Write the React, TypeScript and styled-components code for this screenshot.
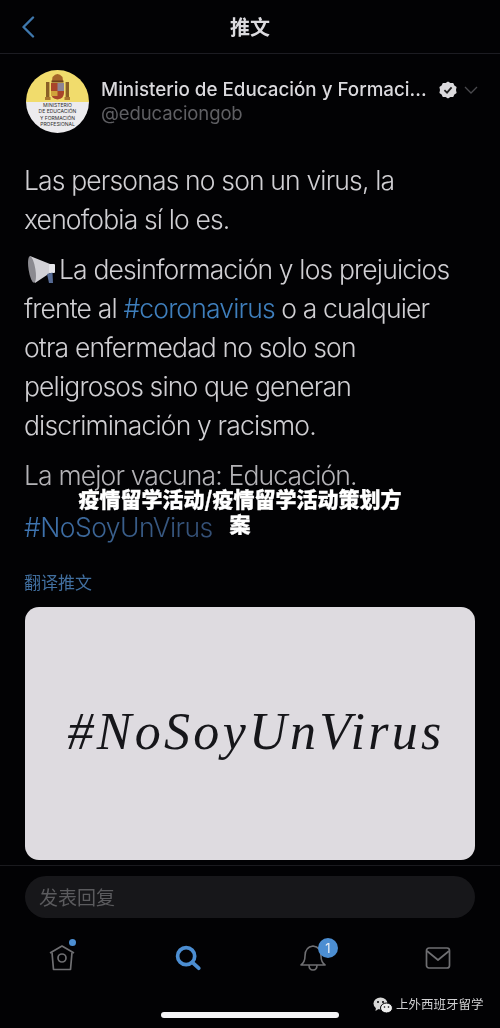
import React from 'react';
import styled, { createGlobalStyle } from 'styled-components';

const CJK = `"Inter", "Noto Sans CJK SC", sans-serif`;

const GlobalStyle = createGlobalStyle`
  html, body {
    margin: 0;
    padding: 0;
    background: #020204;
  }
`;

const App = () => {
  return (
    <Page>
      <GlobalStyle />
      <Screen>
        <Header>
          <BackButton>
            <svg width="14" height="22" viewBox="0 0 14 22" fill="none">
              <path d="M12 1.5 L2.5 11 L12 20.5" stroke="#3f78ad" strokeWidth="2.4" strokeLinecap="round" strokeLinejoin="round" />
            </svg>
          </BackButton>
          <HeaderTitle>推文</HeaderTitle>
        </Header>

        <Tweet>
          <Author>
            <Avatar>
              <AvatarTop>
                <svg width="25" height="27" viewBox="0 0 25 27">
                  <rect x="1" y="9" width="3.4" height="17" fill="#8a5f26" />
                  <rect x="20.6" y="9" width="3.4" height="17" fill="#8a5f26" />
                  <rect x="0" y="24" width="5.5" height="3" fill="#a9762f" />
                  <rect x="19.5" y="24" width="5.5" height="3" fill="#a9762f" />
                  <path d="M7.5 4 Q12.5 -2 17.5 4 L18 8 L7 8 Z" fill="#a5652a" />
                  <rect x="6.5" y="7.5" width="12" height="2" fill="#6f421a" />
                  <path d="M6 10 H19 V20 Q19 25.5 12.5 26.5 Q6 25.5 6 20 Z" fill="#a8452a" />
                  <rect x="12.5" y="10" width="6.5" height="8" fill="#8d8494" />
                  <rect x="6" y="18" width="6.5" height="5" fill="#d0a23a" />
                </svg>
              </AvatarTop>
              <AvatarBottom>
                MINISTERIO
                <br />
                DE EDUCACIÓN
                <br />
                Y FORMACIÓN
                <br />
                PROFESIONAL
              </AvatarBottom>
            </Avatar>
            <Names>
              <NameRow>
                <DisplayName>Ministerio de Educación y Formaci...</DisplayName>
                <RowIcon>
                  <svg width="18" height="18" viewBox="0 0 18 18">
                    <path d="M9 0.5 L11.4 2 L14.2 1.9 L15.4 4.4 L17.6 6 L17 9 L17.6 12 L15.4 13.6 L14.2 16.1 L11.4 16 L9 17.5 L6.6 16 L3.8 16.1 L2.6 13.6 L0.4 12 L1 9 L0.4 6 L2.6 4.4 L3.8 1.9 L6.6 2 Z" fill="#dbdadd" />
                    <path d="M5.4 9.2 L8 11.6 L12.6 6.4" fill="none" stroke="#222" strokeWidth="1.8" />
                  </svg>
                </RowIcon>
                <Caret>
                  <svg width="14" height="8" viewBox="0 0 14 8" fill="none">
                    <path d="M1 1 L7 7 L13 1" stroke="#4a4a4e" strokeWidth="1.3" />
                  </svg>
                </Caret>
              </NameRow>
              <Handle>@educaciongob</Handle>
            </Names>
          </Author>

          <Body>
            <Paragraph>Las personas no son un virus, la xenofobia sí lo es.</Paragraph>
            <Paragraph>
              <Megaphone>
                <svg width="30" height="30" viewBox="0 0 30 30">
                  <path d="M3 1 L23 9 V18 L8 28 Z" fill="#d2d1d6" />
                  <ellipse cx="5" cy="14.5" rx="3.4" ry="13.5" transform="rotate(-9 5 14.5)" fill="#8b8a90" />
                  <rect x="22" y="9" width="6" height="9" rx="1" fill="#e6e6ea" />
                  <path d="M20 19 L25.5 17.5 L26 28 L22 28 Z" fill="#566a94" />
                </svg>
              </Megaphone>
              La desinformación y los prejuicios frente al <Tag>#coronavirus</Tag> o a cualquier otra enfermedad no solo son peligrosos sino que generan discriminación y racismo.
            </Paragraph>
            <Paragraph $fade>La mejor vacuna: Educación.</Paragraph>
            <DimTag>#NoSoyUnVirus</DimTag>
          </Body>

          <Translate>翻译推文</Translate>

          <MediaCard>
            <MediaText>#NoSoyUnVirus</MediaText>
          </MediaCard>
        </Tweet>

        <ReplyBar>
          <ReplyInput>发表回复</ReplyInput>
        </ReplyBar>

        <TabBar>
          <Tab>
            <svg width="26" height="26" viewBox="0 0 26 26" fill="none" stroke="#6f6f72" strokeWidth="1.7" strokeLinejoin="round">
              <path d="M1 8 L13 1 L25 8" />
              <path d="M3 7.5 L4.5 24.5 H21.5 L23 7.5" />
              <circle cx="13" cy="13" r="4" />
            </svg>
            <HomeDot />
          </Tab>
          <SearchTab>
            <svg width="26" height="26" viewBox="0 0 28 28" fill="none" stroke="#4c8ed2">
              <circle cx="12" cy="12" r="9.2" strokeWidth="4" />
              <path d="M19 19 L25.5 25" strokeWidth="4" strokeLinecap="round" />
            </svg>
          </SearchTab>
          <Tab>
            <svg width="26" height="28" viewBox="0 0 26 28" fill="none" stroke="#6f6f72" strokeWidth="1.6" strokeLinejoin="round">
              <path d="M1 21 Q5 18 5 12 Q5 3 13 2 Q21 3 21 12 Q21 18 25 21 Z" />
              <path d="M9 21 Q9 26 13 26 Q17 26 17 21" />
            </svg>
            <Badge>1</Badge>
          </Tab>
          <Tab>
            <svg width="26" height="24" viewBox="0 0 26 24" fill="none" stroke="#6f6f72" strokeWidth="1.7" strokeLinejoin="round">
              <rect x="1.5" y="2" width="23" height="20" rx="2.5" />
              <path d="M2 5 L13 14 L24 5" />
            </svg>
          </Tab>
        </TabBar>

        <HomeIndicator />

        <Watermark>
          <svg width="20" height="17" viewBox="0 0 20 17">
            <ellipse cx="7.5" cy="6.5" rx="7" ry="6" fill="#d8d8d8" />
            <path d="M3 10 L2.5 14 L7 11 Z" fill="#d8d8d8" />
            <ellipse cx="13.5" cy="11" rx="6" ry="5" fill="#eeeeee" stroke="#020204" strokeWidth="1" />
            <circle cx="5" cy="5" r="1" fill="#020204" />
            <circle cx="10" cy="5" r="1" fill="#020204" />
            <circle cx="11.5" cy="10" r="0.8" fill="#020204" />
            <circle cx="15.5" cy="10" r="0.8" fill="#020204" />
          </svg>
          上外西班牙留学
        </Watermark>
      </Screen>

      <OverlayTitle>疫情留学活动/疫情留学活动策划方案</OverlayTitle>
    </Page>
  );
};

const Page = styled.div`
  position: relative;
  width: 500px;
  height: 1028px;
  overflow: hidden;
  background: #020204;
  font-family: ${CJK};
`;

const Screen = styled.div`
  height: 100%;
  display: flex;
  flex-direction: column;
  filter: blur(0.5px);
`;

const Header = styled.header`
  height: 53px;
  flex: none;
  display: flex;
  align-items: center;
  justify-content: center;
  border-bottom: 1px solid #1c1c22;
  position: relative;
`;

const BackButton = styled.div`
  position: absolute;
  left: 21px;
  top: 16px;
  line-height: 0;
`;

const HeaderTitle = styled.h1`
  margin: 0;
  font-size: 20px;
  font-weight: 700;
  color: #dcdbdf;
`;

const Tweet = styled.main`
  padding: 16px 24px 0 24px;
  flex: none;
`;

const Author = styled.div`
  display: flex;
  align-items: center;
  gap: 12px;
  padding-left: 2px;
`;

const Avatar = styled.div`
  width: 63px;
  height: 63px;
  border-radius: 50%;
  overflow: hidden;
  flex: none;
  display: flex;
  flex-direction: column;
`;

const AvatarTop = styled.div`
  height: 32px;
  flex: none;
  background: #f1dc6c;
  display: flex;
  justify-content: center;
  padding-top: 3px;
  box-sizing: border-box;
  overflow: visible;
  position: relative;
  z-index: 1;
`;

const AvatarBottom = styled.div`
  flex: 1;
  background: #ecebee;
  color: #2c2c2c;
  font-size: 5px;
  line-height: 6.4px;
  text-align: center;
`;

const Names = styled.div`
  min-width: 0;
  flex: 1;
`;

const NameRow = styled.div`
  display: flex;
  align-items: center;
  gap: 12px;
`;

const DisplayName = styled.div`
  font-size: 18.8px;
  font-weight: 500;
  line-height: 24px;
  color: #dad9dd;
  white-space: nowrap;
`;

const RowIcon = styled.span`
  flex: none;
  line-height: 0;
`;

const Caret = styled.span`
  flex: none;
  margin-left: -5px;
  line-height: 0;
`;

const Handle = styled.div`
  font-size: 18.5px;
  line-height: 24px;
  margin-top: -1px;
  letter-spacing: -0.1px;
  color: #5f5f63;
`;

const Body = styled.div`
  margin-top: 28px;
  font-size: 26.5px;
  line-height: 39px;
  font-weight: 300;
  letter-spacing: -0.85px;
  color: #d0cfd3;
`;

const Paragraph = styled.p<{ $fade?: boolean }>`
  margin: 0 0 11px 0;
  color: ${(p) => (p.$fade ? '#b4b3b7' : '#d0cfd3')};
`;

const Megaphone = styled.span`
  display: inline-block;
  vertical-align: -6px;
  margin: 0 2px 0 3px;
  line-height: 0;
`;

const Tag = styled.span`
  color: #3f7fbd;
`;

const DimTag = styled.div`
  width: fit-content;
  margin-top: 13px;
  letter-spacing: -0.55px;
  background: linear-gradient(90deg, #3f77b5 0%, #3a5f8c 50%, #344f75 100%);
  -webkit-background-clip: text;
  background-clip: text;
  color: transparent;
`;

const Translate = styled.div`
  margin-top: 24px;
  font-size: 17px;
  line-height: 24px;
  color: #416f9f;
`;

const MediaCard = styled.div`
  margin: 12px 1px 0 1px;
  height: 253px;
  border-radius: 14px;
  background: #dedbe0;
  display: flex;
  align-items: center;
  justify-content: center;
  padding: 0 0 4px 12px;
  box-sizing: border-box;
`;

const MediaText = styled.div`
  font-family: "Liberation Serif", serif;
  font-style: italic;
  font-size: 52px;
  color: #16161a;
  letter-spacing: 3.3px;
`;

const ReplyBar = styled.div`
  margin-top: 5px;
  border-top: 1px solid #1a1a1e;
  padding: 10px 25px 0 25px;
  flex: none;
`;

const ReplyInput = styled.div`
  height: 42px;
  border-radius: 21px;
  background: #17171a;
  color: #5b5b5e;
  font-size: 19px;
  line-height: 45px;
  padding-left: 14px;
`;

const TabBar = styled.nav`
  margin-top: 20px;
  height: 40px;
  display: grid;
  grid-template-columns: repeat(4, 125.5px);
  justify-content: center;
  flex: none;
`;

const Tab = styled.div`
  position: relative;
  display: flex;
  align-items: center;
  justify-content: center;
`;

const SearchTab = styled(Tab)`
  padding-left: 2px;
`;

const HomeDot = styled.span`
  position: absolute;
  left: 70px;
  top: 1px;
  width: 7px;
  height: 7px;
  border-radius: 50%;
  background: #4c8ed2;
`;

const Badge = styled.span`
  position: absolute;
  left: 68px;
  top: 0;
  width: 20px;
  height: 20px;
  border-radius: 50%;
  background: #4c8ed2;
  color: #e8eef5;
  font-size: 13px;
  line-height: 20px;
  text-align: center;
`;

const HomeIndicator = styled.div`
  width: 178px;
  height: 6px;
  margin: 34px auto 0 auto;
  border-radius: 3px;
  background: #f5f5f7;
  flex: none;
`;

const Watermark = styled.div`
  position: absolute;
  left: 373px;
  top: 996px;
  display: flex;
  align-items: center;
  gap: 3px;
  font-size: 12.5px;
  line-height: 18px;
  color: #d0d0d2;
`;

const OverlayTitle = styled.div`
  position: absolute;
  left: 70px;
  top: 486px;
  width: 340px;
  text-align: center;
  font-family: "Noto Sans CJK SC", sans-serif;
  font-size: 21px;
  line-height: 25px;
  font-weight: 900;
  -webkit-text-stroke: 0.3px #ffffff;
  color: #ffffff;
`;

export default App;
